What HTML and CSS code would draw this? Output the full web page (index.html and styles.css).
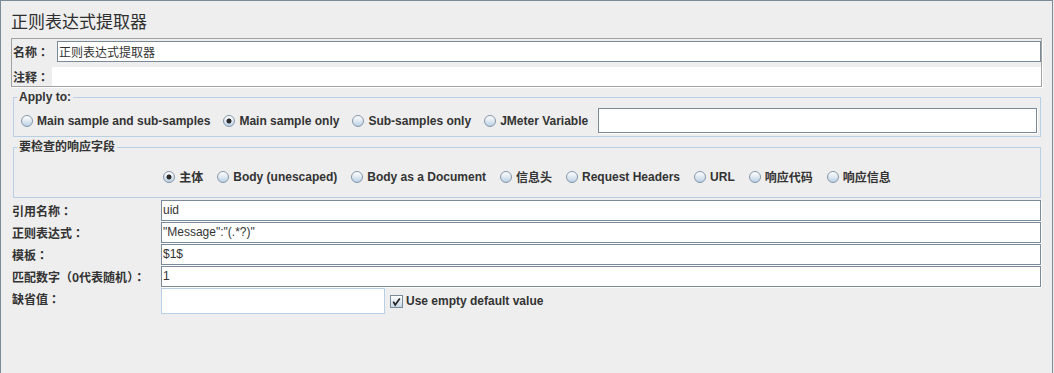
FILE: index.html
```html
<!DOCTYPE html>
<html lang="zh-CN">
<head>
<meta charset="utf-8">
<title>正则表达式提取器</title>
<link rel="stylesheet" href="styles.css">
</head>
<body>
<div class="frame">
  <h1 class="title">正则表达式提取器</h1>

  <div class="namebox">
    <div class="name-row">
      <span class="lbl name-lbl">名称<span class="punct" lang="zh-TW">：</span></span>
      <div class="field name-field">正则表达式提取器</div>
    </div>
    <div class="comment-row">
      <span class="lbl comment-lbl">注释<span class="punct" lang="zh-TW">：</span></span>
      <div class="comment-field"></div>
    </div>
  </div>

  <fieldset class="group apply">
    <legend>Apply to:</legend>
    <div class="radio-row">
      <span class="radio-item"><span class="radio"></span><span class="rtext">Main sample and sub-samples</span></span>
      <span class="radio-item"><span class="radio on"></span><span class="rtext">Main sample only</span></span>
      <span class="radio-item"><span class="radio"></span><span class="rtext">Sub-samples only</span></span>
      <span class="radio-item"><span class="radio"></span><span class="rtext">JMeter Variable</span></span>
      <div class="field var-field"></div>
    </div>
  </fieldset>

  <fieldset class="group fields">
    <legend>要检查的响应字段</legend>
    <div class="radio-row centered">
      <span class="radio-item"><span class="radio on"></span><span class="rtext">主体</span></span>
      <span class="radio-item"><span class="radio"></span><span class="rtext">Body (unescaped)</span></span>
      <span class="radio-item"><span class="radio"></span><span class="rtext">Body as a Document</span></span>
      <span class="radio-item"><span class="radio"></span><span class="rtext">信息头</span></span>
      <span class="radio-item"><span class="radio"></span><span class="rtext">Request Headers</span></span>
      <span class="radio-item"><span class="radio"></span><span class="rtext">URL</span></span>
      <span class="radio-item"><span class="radio"></span><span class="rtext">响应代码</span></span>
      <span class="radio-item"><span class="radio"></span><span class="rtext">响应信息</span></span>
    </div>
  </fieldset>

  <div class="form-grid">
    <span class="lbl row-lbl">引用名称<span class="punct" lang="zh-TW">：</span></span>
    <div class="field">uid</div>

    <span class="lbl row-lbl">正则表达式<span class="punct" lang="zh-TW">：</span></span>
    <div class="field">"Message":"(.*?)"</div>

    <span class="lbl row-lbl">模板<span class="punct" lang="zh-TW">：</span></span>
    <div class="field">$1$</div>

    <span class="lbl row-lbl">匹配数字<span class="punct" lang="zh-TW">（</span>0代表随机<span class="punct" lang="zh-TW">）：</span></span>
    <div class="field">1</div>

    <span class="lbl row-lbl">缺省值<span class="punct" lang="zh-TW">：</span></span>
    <div class="default-cell">
      <div class="default-field"></div>
      <span class="check-item">
        <svg class="checkbox" width="13" height="13" viewBox="0 0 13 13">
          <defs>
            <linearGradient id="cbg" x1="0" y1="0" x2="0" y2="1">
              <stop offset="0" stop-color="#ffffff"/>
              <stop offset="1" stop-color="#c6d6e6"/>
            </linearGradient>
          </defs>
          <rect x="0.5" y="0.5" width="12" height="12" fill="url(#cbg)" stroke="#7a8a99"/>
          <path d="M3.3 6.6 L5.2 10 L9.8 3.4" fill="none" stroke="#222" stroke-width="1.7"/>
        </svg>
        <span class="rtext">Use empty default value</span>
      </span>
    </div>
  </div>
</div>
</body>
</html>
```

FILE: styles.css
```css
* { box-sizing: border-box; }

html, body {
  margin: 0;
  background: #eeeeee;
}

body {
  font-family: "Liberation Sans", "Noto Sans CJK SC", sans-serif;
  font-size: 12px;
  color: #333333;
}

.frame {
  width: 1053px;
  height: 380px;
  border: 1px solid #7a8a99;
  border-bottom: none;
  padding: 10px 10px 0 10px;
}

.title {
  margin: 0;
  height: 20px;
  font-family: "Noto Sans CJK SC", sans-serif;
  font-size: 17px;
  font-weight: normal;
  line-height: 20px;
  color: #2e2e2e;
}

/* name / comment */
.namebox {
  margin-top: 7px;
  height: 49px;
  border: 1px solid #a2a2a2;
  box-shadow: 1px 1px 0 #ffffff;
  padding: 2px 0 0 1px;
}

.lbl {
  font-family: "Noto Sans CJK SC", sans-serif;
  font-weight: bold;
  font-size: 12px;
  color: #333333;
  white-space: nowrap;
}

.punct {
  font-family: "Noto Sans CJK TC", "Noto Sans CJK SC", sans-serif;
}

.name-row {
  display: flex;
  height: 21px;
  align-items: center;
}

.name-lbl { width: 44px; flex: none; line-height: 21px; }

.field {
  height: 21px;
  background: #ffffff;
  border: 1px solid #7a8a99;
  box-shadow: 1px 1px 0 #ffffff;
  padding: 0 1px;
  line-height: 19px;
  font-family: "Liberation Sans", "Noto Sans CJK SC", sans-serif;
  font-size: 12px;
  color: #333333;
  white-space: nowrap;
  overflow: hidden;
}

.name-field {
  flex: 1;
  box-shadow: none;
  font-family: "Noto Sans CJK SC", sans-serif;
}

.comment-row {
  display: flex;
  height: 19px;
  margin-top: 5px;
  align-items: center;
}

.comment-lbl { width: 39px; flex: none; line-height: 19px; }

.comment-field {
  flex: 1;
  height: 19px;
  background: #ffffff;
}

/* titled groups */
.group {
  margin: 4px 1px 0 2px;
  padding: 0;
  min-width: 0;
  border: 1px solid #b8cfe5;
}

.group legend {
  margin-left: 3px;
  padding: 0 2px;
  font-family: "Liberation Sans", "Noto Sans CJK SC", sans-serif;
  font-weight: bold;
  font-size: 12px;
  line-height: 13px;
  color: #333333;
}

.radio-row {
  display: flex;
  align-items: center;
  gap: 14px;
}

.apply .radio-row {
  padding: 4px 3px 3px 7px;
  gap: 13px;
}

.fields .radio-row {
  height: 21px;
  margin: 12px 0 10px;
  justify-content: center;
}

.radio-item {
  display: flex;
  align-items: center;
  gap: 4px;
  white-space: nowrap;
}

.rtext {
  font-family: "Liberation Sans", "Noto Sans CJK SC", sans-serif;
  font-weight: bold;
  font-size: 12px;
  color: #333333;
}

.radio {
  flex: none;
  width: 12px;
  height: 12px;
  border-radius: 50%;
  border: 1px solid #8596a8;
  background: linear-gradient(#ffffff, #dbe6f1 55%, #bcd0e4);
}

.radio.on {
  background:
    radial-gradient(circle at 50% 50%, #2b2b2b 0 2.2px, transparent 2.8px),
    linear-gradient(#ffffff, #dbe6f1 55%, #bcd0e4);
}

.var-field {
  flex: 1;
  height: 25px;
  margin-left: -3px;
}

/* form rows */
.form-grid {
  margin: 2px 1px 0 0;
  display: grid;
  grid-template-columns: 150px 1fr;
  grid-template-rows: 21px 21px 21px 21px 26px;
  row-gap: 1px;
}

.row-lbl {
  line-height: 21px;
  align-self: start;
  padding-left: 1px;
}

.default-cell {
  display: flex;
  align-items: center;
}

.default-field {
  width: 224px;
  height: 26px;
  background: #ffffff;
  border: 1px solid #b8cfe5;
  flex: none;
}

.check-item {
  display: flex;
  align-items: center;
  gap: 3px;
  margin-left: 5px;
}

.checkbox { display: block; flex: none; }
```
